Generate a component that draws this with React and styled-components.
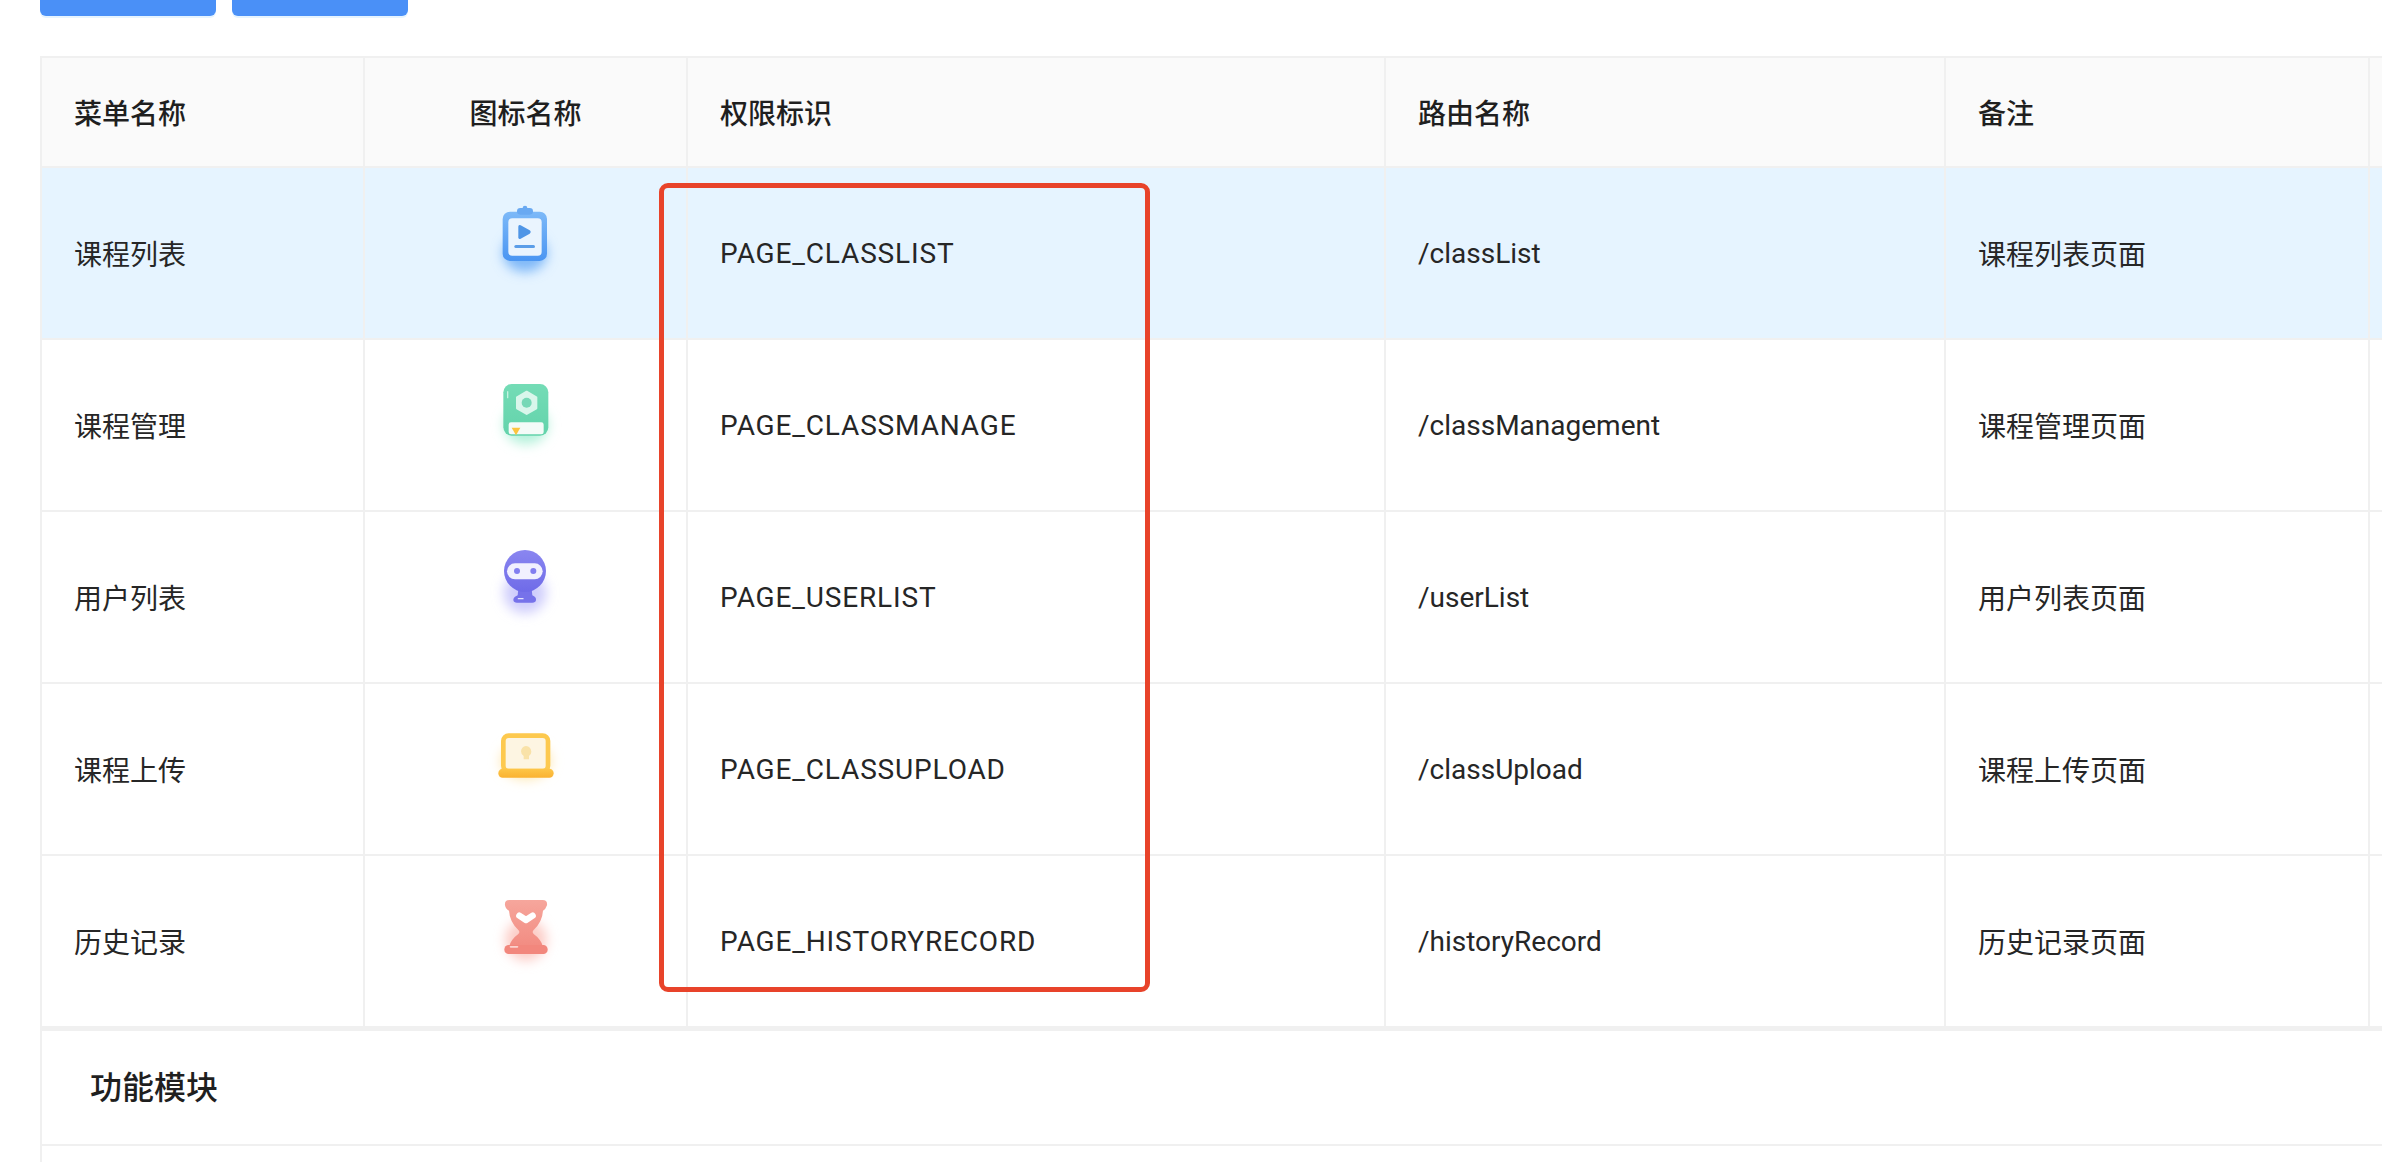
import styled, { createGlobalStyle } from 'styled-components';

const GlobalStyle = createGlobalStyle`
  html, body {
    margin: 0;
    height: 100%;
    overflow: hidden;
    background: #fff;
  }
  body {
    font-family: Roboto, "Noto Sans CJK SC", sans-serif;
    color: #262626;
  }
`;

function Glow({ id, color, cx, cy, rx, ry }) {
  return (
    <>
      <defs>
        <filter id={id} x='-60%' y='-60%' width='220%' height='220%'>
          <feGaussianBlur stdDeviation='18' />
        </filter>
      </defs>
      <ellipse cx={cx} cy={cy} rx={rx} ry={ry} fill={color} filter={`url(#${id})`} />
    </>
  );
}

function ClipboardIcon() {
  return (
    <IconSvg viewBox='15 9 360 360'>
      <defs>
        <linearGradient id='clipFill' x1='0' y1='0' x2='0' y2='1'>
          <stop offset='0' stopColor='#7db9f8' />
          <stop offset='1' stopColor='#4a95f2' />
        </linearGradient>
      </defs>
      <Glow id='clipGlow' color='#7fb8f8' cx={192} cy={190} rx={66} ry={56} />
      <rect x='125' y='65' width='133' height='148' rx='22' fill='url(#clipFill)' />
      <rect x='168' y='54' width='48' height='20' rx='10' fill='#69a9f2' />
      <circle cx='192' cy='54' r='7' fill='#69a9f2' />
      <rect x='142' y='85' width='100' height='112' rx='12' fill='#eaf4fe' />
      <path d='M172 110 Q172 103 179 106 L206 121 Q212 126 206 131 L179 146 Q172 149 172 142 Z' fill='#4f95e6' />
      <rect x='160' y='165' width='62' height='9' rx='4.5' fill='#5b9de8' />
    </IconSvg>
  );
}

function BookIcon() {
  return (
    <IconSvg viewBox='15 0 360 360'>
      <defs>
        <linearGradient id='bookFill' x1='0' y1='0' x2='0' y2='1'>
          <stop offset='0' stopColor='#74dcb6' />
          <stop offset='1' stopColor='#63d3ab' />
        </linearGradient>
      </defs>
      <Glow id='bookGlow' color='#b4f1da' cx={195} cy={180} rx={66} ry={58} />
      <rect x='127' y='57' width='135' height='155' rx='25' fill='url(#bookFill)' />
      <rect x='138' y='78' width='4' height='22' rx='2' fill='#c5f3e1' />
      <path d='M197 80 L226 97 L226 130 L197 147 L168 130 L168 97 Z' fill='#d9f6eb' stroke='#d9f6eb' strokeWidth='6' strokeLinejoin='round' />
      <circle cx='197' cy='113' r='15' fill='#76d8b6' />
      <rect x='143' y='172' width='105' height='36' rx='7' fill='#f4fbf8' />
      <path d='M152 188 L178 188 L165 211 Z' fill='#fcc53f' />
    </IconSvg>
  );
}

function BotIcon() {
  return (
    <IconSvg viewBox='15 3 360 360'>
      <defs>
        <linearGradient id='botFill' x1='0' y1='0' x2='0' y2='1'>
          <stop offset='0' stopColor='#8a86f0' />
          <stop offset='1' stopColor='#6f6be8' />
        </linearGradient>
      </defs>
      <Glow id='botGlow' color='#cfcdfc' cx={192} cy={170} rx={64} ry={62} />
      <path d='M172 158 L212 158 L214 178 Q226 183 225 192 Q224 200 214 200 L168 200 Q158 200 157 192 Q157 183 170 178 Z' fill='#7672ea' />
      <circle cx='192' cy='105' r='63' fill='url(#botFill)' />
      <rect x='138' y='82' width='107' height='48' rx='24' fill='#f1f0fe' />
      <circle cx='168' cy='105' r='9' fill='#827ef0' />
      <circle cx='217' cy='105' r='9' fill='#827ef0' />
      <rect x='170' y='186' width='18' height='4' rx='2' fill='#e3e2fd' />
    </IconSvg>
  );
}

function LaptopIcon() {
  return (
    <IconSvg viewBox='15 9 360 360'>
      <defs>
        <linearGradient id='lapBase' x1='0' y1='0' x2='0' y2='1'>
          <stop offset='0' stopColor='#fdc648' />
          <stop offset='1' stopColor='#fab232' />
        </linearGradient>
      </defs>
      <Glow id='lapGlow' color='#fde8b4' cx={195} cy={165} rx={76} ry={56} />
      <rect x='127' y='89' width='134' height='106' rx='16' fill='#fdf5e2' stroke='#fdc94e' strokeWidth='14' />
      <path d='M195 120 Q210 122 211 137 Q211 146 204 150 L204 160 L188 160 L188 150 Q180 145 180 136 Q181 122 195 120 Z' fill='#f9e2a8' />
      <rect x='112' y='188' width='166' height='27' rx='13' fill='url(#lapBase)' />
    </IconSvg>
  );
}

function HourglassIcon() {
  return (
    <IconSvg viewBox='15 3 360 360'>
      <defs>
        <linearGradient id='glassFill' x1='0' y1='0' x2='0' y2='1'>
          <stop offset='0' stopColor='#f6a69c' />
          <stop offset='1' stopColor='#f28c82' />
        </linearGradient>
      </defs>
      <Glow id='glassGlow' color='#fcccc6' cx={195} cy={180} rx={62} ry={62} />
      <path d='M145 60 L245 60 Q260 60 258 76 Q254 88 246 92 Q244 125 218 150 Q212 156 218 162 Q240 178 246 200 L144 200 Q150 178 172 162 Q178 156 172 150 Q146 125 144 92 Q134 88 132 76 Q130 60 145 60 Z' fill='url(#glassFill)' />
      <path d='M175 107 L195 120 L215 107' fill='none' stroke='#fff' strokeWidth='19' strokeLinecap='round' strokeLinejoin='round' />
      <rect x='130' y='195' width='130' height='27' rx='13' fill='#f2877d' />
      <rect x='146' y='198' width='26' height='5' rx='2.5' fill='#fbd3ce' />
    </IconSvg>
  );
}

const columns = [
  { title: '菜单名称', width: 323 },
  { title: '图标名称', width: 323, center: true },
  { title: '权限标识', width: 698 },
  { title: '路由名称', width: 560 },
  { title: '备注', width: 424 },
  { title: '', width: 61 },
];

const rows = [
  { name: '课程列表', Icon: ClipboardIcon, code: 'PAGE_CLASSLIST', route: '/classList', note: '课程列表页面', active: true },
  { name: '课程管理', Icon: BookIcon, code: 'PAGE_CLASSMANAGE', route: '/classManagement', note: '课程管理页面' },
  { name: '用户列表', Icon: BotIcon, code: 'PAGE_USERLIST', route: '/userList', note: '用户列表页面' },
  { name: '课程上传', Icon: LaptopIcon, code: 'PAGE_CLASSUPLOAD', route: '/classUpload', note: '课程上传页面' },
  { name: '历史记录', Icon: HourglassIcon, code: 'PAGE_HISTORYRECORD', route: '/historyRecord', note: '历史记录页面' },
];

export default function App() {
  return (
    <Page>
      <GlobalStyle />
      <Toolbar>
        <BlueButton />
        <BlueButton />
      </Toolbar>
      <TableWrap>
        <Table>
          <colgroup>
            {columns.map((col, i) => (
              <col key={i} style={{ width: col.width }} />
            ))}
          </colgroup>
          <thead>
            <tr>
              {columns.map((col, i) => (
                <HeadCell key={i} $center={col.center}>{col.title}</HeadCell>
              ))}
            </tr>
          </thead>
          <tbody>
            {rows.map(({ name, Icon, code, route, note, active }) => (
              <Row key={code} $active={active}>
                <Cell>{name}</Cell>
                <Cell $center>
                  <IconSlot><Icon /></IconSlot>
                </Cell>
                <CodeCell>{code}</CodeCell>
                <Cell>{route}</Cell>
                <Cell>{note}</Cell>
                <Cell />
              </Row>
            ))}
          </tbody>
        </Table>
        <Highlight />
      </TableWrap>
      <Section>
        <SectionTitle>功能模块</SectionTitle>
        <SectionBody />
      </Section>
    </Page>
  );
}

const Page = styled.div`
  width: 2382px;
  height: 1162px;
  overflow: hidden;
`;

const Toolbar = styled.div`
  display: flex;
  gap: 16px;
  margin: -48px 0 40px 40px;
`;

const BlueButton = styled.button`
  width: 176px;
  height: 64px;
  border: none;
  border-radius: 6px;
  background: #4a90f7;
  box-shadow: 0 2px 0 rgba(5, 145, 255, 0.1);
`;

const TableWrap = styled.div`
  position: relative;
  margin-left: 40px;
  width: 2389px;
`;

const Table = styled.table`
  width: 2389px;
  table-layout: fixed;
  border-collapse: separate;
  border-spacing: 0;
  border-top: 2px solid #f0f0f0;
  border-left: 2px solid #f0f0f0;
  font-size: 28px;
`;

const HeadCell = styled.th`
  height: 110px;
  padding: 0 32px;
  box-sizing: border-box;
  background: #fafafa;
  color: #1f1f1f;
  font-weight: 500;
  text-align: ${(props) => (props.$center ? 'center' : 'left')};
  border-right: 2px solid #f0f0f0;
  border-bottom: 2px solid #f0f0f0;
`;

const Row = styled.tr`
  background: ${(props) => (props.$active ? '#e6f4ff' : '#fff')};
`;

const Cell = styled.td`
  height: 172px;
  padding: 0 32px;
  box-sizing: border-box;
  text-align: ${(props) => (props.$center ? 'center' : 'left')};
  border-right: 2px solid #f0f0f0;
  border-bottom: 2px solid #f0f0f0;
`;

const CodeCell = styled(Cell)`
  letter-spacing: 0.85px;
`;

const IconSlot = styled.div`
  display: flex;
  justify-content: center;
  margin: 0 -32px;
`;

const IconSvg = styled.svg`
  display: block;
  width: 120px;
  height: 120px;
  filter: blur(0.7px);
`;

const Highlight = styled.div`
  position: absolute;
  left: 619px;
  top: 127px;
  width: 491px;
  height: 809px;
  box-sizing: border-box;
  border: 5px solid #e8432a;
  border-radius: 9px;
  pointer-events: none;
`;

const Section = styled.section`
  margin: 0 0 0 40px;
  border-top: 3px solid #f0f0f0;
  border-left: 2px solid #f0f0f0;
`;

const SectionTitle = styled.h3`
  margin: 0;
  height: 115px;
  padding: 0 48px 5px;
  display: flex;
  align-items: center;
  box-sizing: border-box;
  font-size: 32px;
  font-weight: 500;
  color: #1f1f1f;
  border-bottom: 2px solid #f0f0f0;
`;

const SectionBody = styled.div`
  height: 40px;
`;
